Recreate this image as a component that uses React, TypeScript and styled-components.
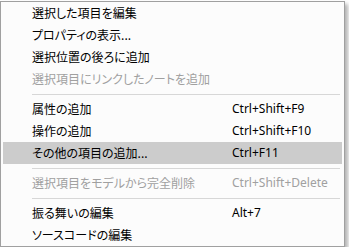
import React from "react";
import styled, { createGlobalStyle } from "styled-components";

const GlobalStyle = createGlobalStyle`
  html, body {
    margin: 0;
    padding: 0;
    background: #ffffff;
  }
`;

const Menu = styled.div`
  box-sizing: border-box;
  width: 345px;
  margin-top: 1px;
  padding: 0 2px;
  display: flex;
  flex-direction: column;
  background-color: #fcfcfc;
  border: 1px solid #a0a0a0;
  box-shadow: 3px 3px 4px rgba(0, 0, 0, 0.3);
  font-family: "Noto Sans CJK JP", "Noto Sans", sans-serif;
  font-size: 12px;
  cursor: default;
`;

const Item = styled.div<{ $disabled?: boolean; $active?: boolean }>`
  height: 22px;
  padding-left: 29px;
  display: grid;
  grid-template-columns: 200px 1fr;
  align-items: center;
  color: ${(p) => (p.$disabled ? "#a0a0a0" : "#000000")};
  background-color: ${(p) => (p.$active ? "#cccccc" : "transparent")};
`;

const Label = styled.span`
  white-space: nowrap;
  font-feature-settings: "palt";
  line-height: 1;
`;

const Shortcut = styled.span`
  white-space: nowrap;
  font-family: "Noto Sans", "Open Sans", sans-serif;
  line-height: 1;
`;

const Separator = styled.div`
  height: 8px;
  display: flex;
  align-items: center;
  padding-left: 29px;
  padding-right: 2px;

  &::after {
    content: "";
    flex: 1;
    height: 1px;
    background-color: #d7d7d7;
  }
`;

type Entry =
  | { label: string; shortcut?: string; disabled?: boolean; active?: boolean }
  | "sep";

const entries: Entry[] = [
  { label: "選択した項目を編集" },
  { label: "プロパティの表示..." },
  { label: "選択位置の後ろに追加" },
  { label: "選択項目にリンクしたノートを追加", disabled: true },
  "sep",
  { label: "属性の追加", shortcut: "Ctrl+Shift+F9" },
  { label: "操作の追加", shortcut: "Ctrl+Shift+F10" },
  { label: "その他の項目の追加...", shortcut: "Ctrl+F11", active: true },
  "sep",
  {
    label: "選択項目をモデルから完全削除",
    shortcut: "Ctrl+Shift+Delete",
    disabled: true,
  },
  "sep",
  { label: "振る舞いの編集", shortcut: "Alt+7" },
  { label: "ソースコードの編集" },
];

const App = () => {
  return (
    <>
      <GlobalStyle />
      <Menu>
        {entries.map((e, i) =>
          e === "sep" ? (
            <Separator key={i} />
          ) : (
            <Item key={i} $disabled={e.disabled} $active={e.active}>
              <Label>{e.label}</Label>
              {e.shortcut && <Shortcut>{e.shortcut}</Shortcut>}
            </Item>
          )
        )}
      </Menu>
    </>
  );
};

export default App;
